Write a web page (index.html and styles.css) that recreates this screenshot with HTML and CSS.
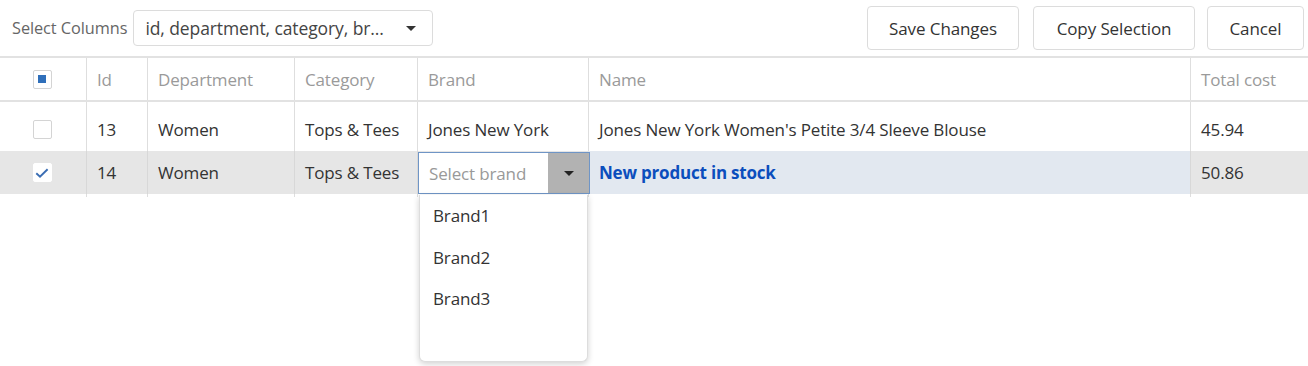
FILE: index.html
```html
<!DOCTYPE html>
<html>
<head>
<meta charset="utf-8">
<link rel="stylesheet" href="styles.css">
</head>
<body>
<div class="app">
  <div class="toolbar">
    <div class="col-picker">
      <span class="picker-label">Select Columns</span>
      <div class="picker-select">
        <span class="picker-value">id, department, category, br...</span>
        <span class="caret"></span>
      </div>
    </div>
    <div class="actions">
      <button class="btn btn-save">Save Changes</button>
      <button class="btn btn-copy">Copy Selection</button>
      <button class="btn btn-cancel">Cancel</button>
    </div>
  </div>
  <div class="grid">
    <div class="row head">
      <div class="cell chk"><span class="box box-ind"><span class="ind"></span></span></div>
      <div class="cell">Id</div>
      <div class="cell">Department</div>
      <div class="cell">Category</div>
      <div class="cell">Brand</div>
      <div class="cell">Name</div>
      <div class="cell">Total cost</div>
    </div>
    <div class="body">
      <div class="row">
        <div class="cell chk"><span class="box"></span></div>
        <div class="cell">13</div>
        <div class="cell">Women</div>
        <div class="cell">Tops &amp; Tees</div>
        <div class="cell">Jones New York</div>
        <div class="cell">Jones New York Women's Petite 3/4 Sleeve Blouse</div>
        <div class="cell">45.94</div>
      </div>
      <div class="row selected">
        <div class="cell chk"><span class="box box-checked"><svg width="16" height="16" viewBox="0 0 16 16"><path d="M2.3 8.2 L6 11.6 L13.6 4.2" fill="none" stroke="#3a6db3" stroke-width="1.9"/></svg></span></div>
        <div class="cell">14</div>
        <div class="cell">Women</div>
        <div class="cell">Tops &amp; Tees</div>
        <div class="cell editor-cell">
          <div class="editor">
            <span class="editor-placeholder">Select brand</span>
            <span class="editor-btn"><span class="caret caret-dark"></span></span>
          </div>
          <div class="popup">
            <div class="popup-item">Brand1</div>
            <div class="popup-item">Brand2</div>
            <div class="popup-item">Brand3</div>
          </div>
        </div>
        <div class="cell name-edited">New product in stock</div>
        <div class="cell">50.86</div>
      </div>
    </div>
  </div>
</div>
</body>
</html>
```

FILE: styles.css
```css
html, body {
  margin: 0;
  padding: 0;
  background: #fff;
}
body {
  font-family: "Open Sans", "Noto Sans", sans-serif;
  color: #333;
  width: 1308px;
  height: 366px;
  overflow: hidden;
}
.app {
  position: relative;
}
.toolbar {
  display: flex;
  justify-content: space-between;
  align-items: center;
  height: 56px;
  border-bottom: 2px solid #e2e2e2;
  padding: 0 4px 0 12px;
}
.col-picker {
  display: flex;
  align-items: center;
  gap: 6px;
}
.picker-label {
  font-size: 16.3px;
  color: #666;
  letter-spacing: -0.05px;
}
.picker-select {
  box-sizing: border-box;
  width: 300px;
  height: 36px;
  border: 1px solid #dcdcdc;
  border-radius: 4px;
  display: flex;
  align-items: center;
  justify-content: space-between;
  padding: 0 16px 0 11px;
}
.picker-value {
  font-size: 17.5px;
  color: #444;
  letter-spacing: -0.1px;
}
.caret {
  width: 0;
  height: 0;
  border-left: 5px solid transparent;
  border-right: 5px solid transparent;
  border-top: 5px solid #333;
}
.actions {
  display: flex;
}
.btn {
  box-sizing: border-box;
  height: 44px;
  background: #fff;
  border: 1px solid #dcdcdc;
  border-radius: 4px;
  font-family: "Open Sans", "Noto Sans", sans-serif;
  font-size: 17px;
  color: #333;
  padding: 0;
  letter-spacing: -0.1px;
}
.btn-save { width: 152px; }
.btn-copy { width: 162px; margin-left: 14px; }
.btn-cancel { width: 97px; margin-left: 12px; }

.grid {
  font-size: 17px;
}
.row {
  display: grid;
  grid-template-columns: 87px 61px 147px 123px 171px 602px 1fr;
  height: 43px;
}
.cell {
  box-sizing: border-box;
  border-right: 1px solid #dedede;
  padding-left: 10px;
  display: flex;
  align-items: center;
  white-space: nowrap;
  letter-spacing: -0.15px;
}
.cell:last-child {
  border-right: none;
}
.head {
  height: 42px;
  border-bottom: 2px solid #e2e2e2;
  color: #9a9a9a;
}
.body {
  padding: 6px 0 3px;
  background: linear-gradient(to right,
    transparent 86px, #dedede 86px, #dedede 87px, transparent 87px,
    transparent 147px, #dedede 147px, #dedede 148px, transparent 148px,
    transparent 294px, #dedede 294px, #dedede 295px, transparent 295px,
    transparent 417px, #dedede 417px, #dedede 418px, transparent 418px,
    transparent 588px, #dedede 588px, #dedede 589px, transparent 589px,
    transparent 1190px, #dedede 1190px, #dedede 1191px, transparent 1191px);
  color: #333;
}
.chk {
  justify-content: center;
  padding-left: 0;
  padding-right: 2px;
}
.box {
  box-sizing: border-box;
  width: 19px;
  height: 19px;
  border: 1px solid #d4d4d4;
  border-radius: 2px;
  background: #fff;
  display: flex;
  align-items: center;
  justify-content: center;
}
.ind {
  width: 8px;
  height: 8px;
  background: #2f6fba;
}
.box-checked {
  border-color: #fff;
}
.selected {
  background: #e6e6e6;
}
.selected .cell {
  border-right-color: #d8d8d8;
}
.name-edited {
  background: #e2e8f0;
  color: #0b4ebd;
  font-weight: 700;
  letter-spacing: -0.2px;
}
.editor-cell {
  position: relative;
  padding: 0;
  border-right: none;
}
.editor {
  box-sizing: border-box;
  position: absolute;
  left: 0;
  top: 1px;
  width: 172px;
  height: 42px;
  border: 1px solid #6f95c6;
  background: #fff;
  display: flex;
  align-items: stretch;
  z-index: 2;
}
.editor-placeholder {
  flex: 1;
  display: flex;
  align-items: center;
  padding-left: 10px;
  color: #999;
}
.editor-btn {
  width: 41px;
  background: #b2b2b2;
  display: flex;
  align-items: center;
  justify-content: center;
}
.caret-dark {
  border-top-color: #222;
}
.popup {
  position: absolute;
  left: 1px;
  top: 44px;
  width: 169px;
  height: 167px;
  box-sizing: border-box;
  background: #fff;
  border: 1px solid #ddd;
  border-top: none;
  border-radius: 0 0 6px 6px;
  box-shadow: 0 2px 6px rgba(0,0,0,0.18);
  z-index: 3;
}
.popup-item {
  height: 41.5px;
  display: flex;
  align-items: center;
  padding-left: 13px;
  color: #333;
}
```
